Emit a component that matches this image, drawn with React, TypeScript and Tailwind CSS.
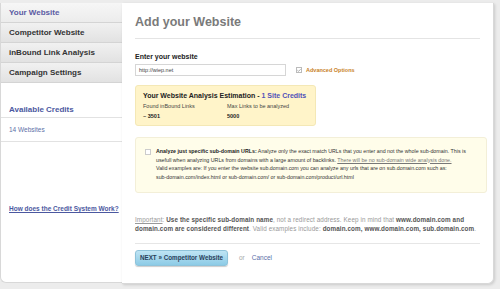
import { Check } from "lucide-react";

const tabClass =
  "h-[20px] flex items-center pl-[8px] text-[8px] font-bold border-b border-[#d4d4d4] bg-gradient-to-b from-[#f1f1f1] to-[#e2e2e2]";

export default function App() {
  return (
    <div
      className="w-[500px] h-[289px] bg-[#ececec] flex pt-[3px] overflow-hidden"
      style={{ fontFamily: '"Liberation Sans", Arial, sans-serif' }}
    >
      {/* Sidebar */}
      <aside className="w-[122px] h-[280px] bg-white border-l border-b border-[#d8d8d8] rounded-bl-[6px] flex flex-col">
        <div className={`${tabClass} text-[#5b5ba3] from-[#f6f6f6] to-[#ececec]`}>Your Website</div>
        <div className={`${tabClass} text-[#333]`}>Competitor Website</div>
        <div className={`${tabClass} text-[#333]`}>inBound Link Analysis</div>
        <div className={`${tabClass} text-[#333]`}>Campaign Settings</div>
        <div className="mt-[23px] pl-[8px] pb-[3px] text-[8px] leading-[8px] font-bold text-[#4b58a0] border-b border-[#e2e2e2]">
          Available Credits
        </div>
        <div className="h-[24px] flex items-center pl-[8px] text-[6.5px] text-[#6070a8] border-b border-[#e2e2e2]">
          14 Websites
        </div>
        <a className="mt-[63px] pl-[8px] text-[6.5px] leading-[8px] font-bold text-[#4b58a0] underline">
          How does the Credit System Work?
        </a>
      </aside>

      {/* Main panel */}
      <main className="w-[372px] h-[281px] bg-white border-r border-b border-[#d8d8d8] rounded-br-[6px] shadow-[1px_1px_3px_rgba(0,0,0,0.15)] px-[13px] pt-[13px]">
        <h1 className="text-[12.5px] leading-[13px] font-bold text-[#7a7a7a] pb-[9px] border-b border-[#e4e4e4]">
          Add your Website
        </h1>
        <div className="mt-[14px] text-[7px] leading-[8px] font-bold text-[#222]">Enter your website</div>
        <div className="mt-[3px] flex items-center">
          <div className="w-[151px] h-[12px] border border-[#d6d6d6] flex items-center px-[3px] text-[5.5px] text-[#444]">
            http://wiep.net
          </div>
          <div className="ml-[10px] w-[6px] h-[6px] border border-[#bbb] flex items-center justify-center">
            <Check size={5} strokeWidth={3} color="#555" />
          </div>
          <span className="ml-[4px] text-[5.5px] text-[#c8811f] font-bold">Advanced Options</span>
        </div>

        <div className="mt-[9px] w-[181px] h-[41px] bg-[#fff4c9] border border-[#f4e8b6] rounded-[3px] px-[7px] pt-[6px]">
          <div className="text-[7px] font-bold text-[#222] leading-none whitespace-nowrap">
            Your Website Analysis Estimation - <span className="text-[#5050b8]">1 Site Credits</span>
          </div>
          <div className="mt-[2px] grid grid-cols-[84px_1fr] text-[5.5px] text-[#444] leading-[10px]">
            <span>Found inBound Links</span>
            <span>Max Links to be analyzed</span>
            <span className="font-bold text-[#222]">~ 3501</span>
            <span className="font-bold text-[#222]">5000</span>
          </div>
        </div>

        <div className="mt-[11px] w-[352px] h-[56px] bg-[#fffdea] border border-[#f3efd8] rounded-[3px] flex pl-[9px] pt-[9px]">
          <div className="w-[6px] h-[6px] border border-[#ccc] bg-white mt-[2px] shrink-0" />
          <p className="ml-[5px] text-[5.3px] leading-[8.5px] text-[#333] whitespace-nowrap">
            <b className="text-[#222]">Analyze just specific sub-domain URLs:</b> Analyze only the exact match
            URLs that you enter and not the whole sub-domain. This is
            <br />
            usefull when analyzing URLs from domains with a large amount of backlinks.{" "}
            <span className="underline text-[#777]">There will be no sub-domain wide analysis done.</span>
            <br />
            Valid examples are: If you enter the website sub.domain.com you can analyze any urls that are on
            sub.domain.com such as:
            <br />
            sub-domain.com/index.html or sub-domain.com/ or sub-domain.com/product/url.html
          </p>
        </div>

        <p className="mt-[22px] text-[6.3px] leading-[9px] text-[#999] tracking-[0.1px]">
          <span className="underline">Important</span>:{" "}
          <b className="text-[#555]">Use the specific sub-domain name</b>, not a redirect address. Keep in mind
          that <b className="text-[#555]">www.domain.com and</b>
          <br />
          <b className="text-[#555]">domain.com are considered different</b>. Valid examples include:{" "}
          <b className="text-[#555]">domain.com, www.domain.com, sub.domain.com</b>.
        </p>
        <div className="mt-[10px] border-t border-[#e6e6e6]" />
        <div className="mt-[6px] flex items-center">
          <button className="w-[93px] h-[16px] rounded-[3px] bg-gradient-to-b from-[#bfe4f4] to-[#8ccbe6] border border-[#8fc3da] shadow-[0_1px_1px_rgba(0,0,0,0.2)] text-[6.3px] font-bold text-[#2a3f5a]">
            NEXT » Competitor Website
          </button>
          <span className="ml-[11px] text-[6.5px] text-[#aaa]">or</span>
          <span className="ml-[7px] text-[6.5px] text-[#5b6fa8]">Cancel</span>
        </div>
      </main>
    </div>
  );
}
